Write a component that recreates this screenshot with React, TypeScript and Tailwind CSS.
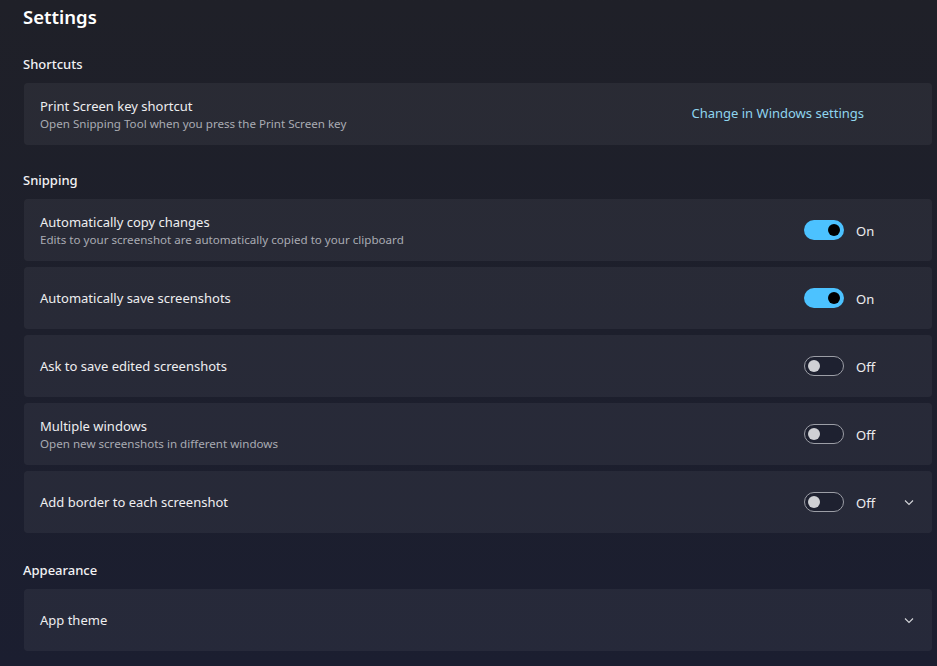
import type { ReactNode } from "react";

function Toggle({ on }: { on: boolean }) {
  if (on) {
    return (
      <div className="flex h-5 w-10 items-center justify-end rounded-full bg-[#4cc2ff] pr-[4px]">
        <div className="h-3 w-3 rounded-full bg-black" />
      </div>
    );
  }
  return (
    <div className="flex h-5 w-10 items-center rounded-full border border-[#9c9ea6] bg-[#1e2130] pl-[3px]">
      <div className="h-3 w-3 rounded-full bg-[#cfd0d4]" />
    </div>
  );
}

function Chevron() {
  return (
    <svg width="12" height="12" viewBox="0 0 12 12" className="text-[#d4d5d9]">
      <polyline points="2,4.5 6,8.5 10,4.5" fill="none" stroke="currentColor" strokeWidth="1.1" />
    </svg>
  );
}

function Card({ title, desc, children }: { title: string; desc?: string; children?: ReactNode }) {
  return (
    <div className="flex h-[62px] items-center justify-between rounded bg-white/5 pr-[17px] pl-4">
      <div className="flex flex-col">
        <div className="text-[13px] leading-[20px] text-[#eeeef0]">{title}</div>
        {desc && <div className="text-[11.6px] leading-[16px] text-[#a9abb3]">{desc}</div>}
      </div>
      <div className="flex items-center">{children}</div>
    </div>
  );
}

function ToggleRow({ title, desc, on, chevron }: { title: string; desc?: string; on: boolean; chevron?: boolean }) {
  return (
    <Card title={title} desc={desc}>
      <Toggle on={on} />
      <div className="ml-3 w-[47px] pt-[2px] text-[13px] leading-[20px] text-[#eeeef0]">{on ? "On" : "Off"}</div>
      <div className="flex w-3 justify-center">{chevron && <Chevron />}</div>
    </Card>
  );
}

function Heading({ children }: { children: ReactNode }) {
  return <div className="mb-[9px] -ml-px text-[13px] leading-[20px] font-medium text-[#f2f2f4]">{children}</div>;
}

export default function App() {
  return (
    <div
      className="h-[666px] w-[937px] overflow-hidden bg-gradient-to-b from-[#1f2028] to-[#1b1e30] pr-[5px] pl-6"
      style={{ fontFamily: '"Noto Sans", "Open Sans", sans-serif' }}
    >
      <h1 className="-ml-px pt-[3px] text-[18.5px] leading-[28px] font-semibold text-white">Settings</h1>

      <div className="mt-[23px]">
        <Heading>Shortcuts</Heading>
        <Card title="Print Screen key shortcut" desc="Open Snipping Tool when you press the Print Screen key">
          <span className="mr-[51px] text-[13px] text-[#8fd5ef]">Change in Windows settings</span>
        </Card>
      </div>

      <div className="mt-[25px]">
        <Heading>Snipping</Heading>
        <div className="flex flex-col gap-[6px]">
          <ToggleRow
            title="Automatically copy changes"
            desc="Edits to your screenshot are automatically copied to your clipboard"
            on
          />
          <ToggleRow title="Automatically save screenshots" on />
          <ToggleRow title="Ask to save edited screenshots" on={false} />
          <ToggleRow title="Multiple windows" desc="Open new screenshots in different windows" on={false} />
          <ToggleRow title="Add border to each screenshot" on={false} chevron />
        </div>
      </div>

      <div className="mt-[27px]">
        <Heading>Appearance</Heading>
        <Card title="App theme">
          <div className="flex w-3 justify-center">
            <Chevron />
          </div>
        </Card>
      </div>
    </div>
  );
}
